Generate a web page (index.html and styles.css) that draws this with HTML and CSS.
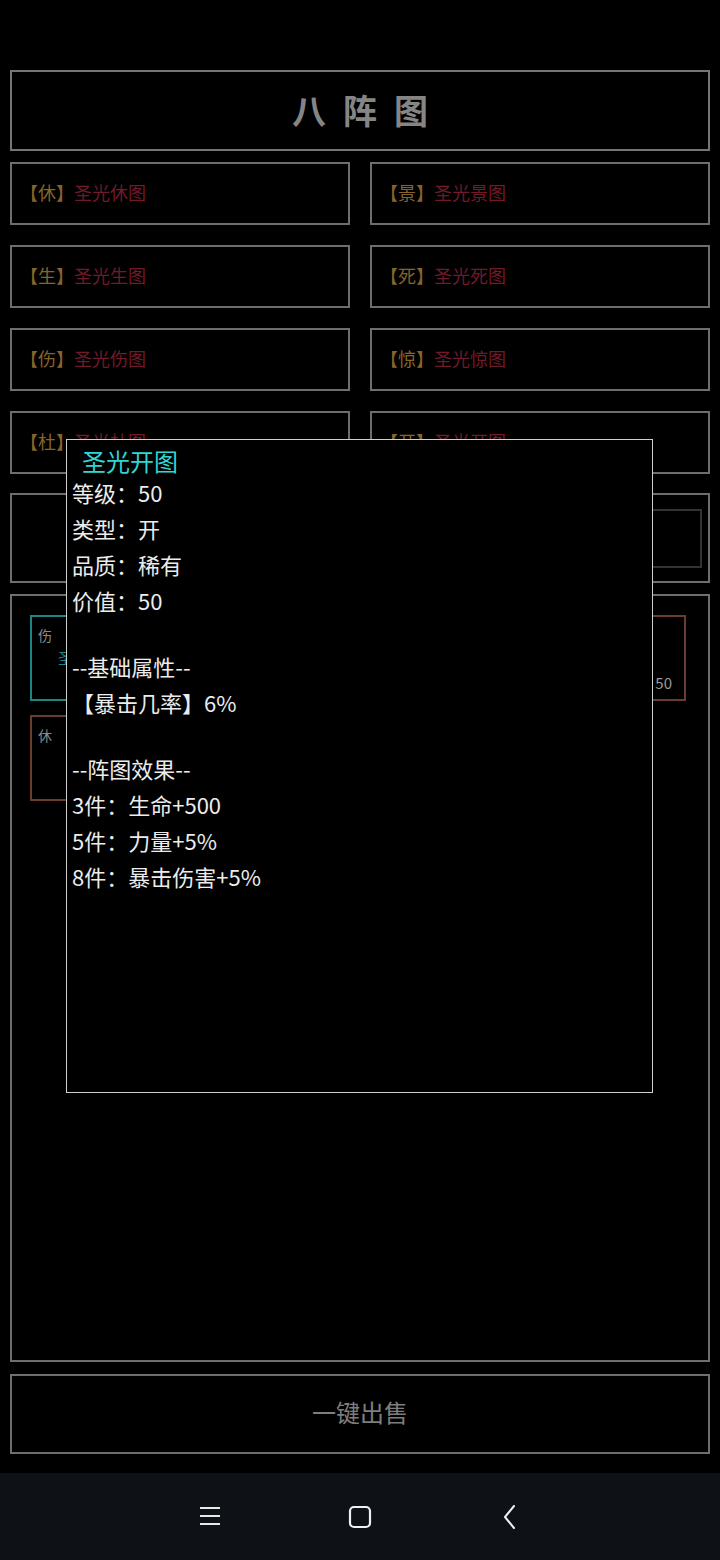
FILE: index.html
```html
<!DOCTYPE html>
<html>
  <head>
    <meta name="viewport" content="width=device-width, initial-scale=1">
    <link rel="stylesheet" href="styles.css">
  </head>

  <body>
    <div class="status"></div>

    <div class="page">
      <div class="title">八阵图</div>

      <div class="slots">
        <div class="slot"><span class="tag">【休】</span><span class="name">圣光休图</span></div>
        <div class="slot"><span class="tag">【景】</span><span class="name">圣光景图</span></div>
        <div class="slot"><span class="tag">【生】</span><span class="name">圣光生图</span></div>
        <div class="slot"><span class="tag">【死】</span><span class="name">圣光死图</span></div>
        <div class="slot"><span class="tag">【伤】</span><span class="name">圣光伤图</span></div>
        <div class="slot"><span class="tag">【惊】</span><span class="name">圣光惊图</span></div>
        <div class="slot"><span class="tag">【杜】</span><span class="name">圣光杜图</span></div>
        <div class="slot"><span class="tag">【开】</span><span class="name">圣光开图</span></div>
      </div>

      <div class="bar">
        <div class="bar-box"></div>
      </div>

      <div class="bag">
        <div class="card cyan">
          <span class="card-type">伤</span>
          <span class="card-name">圣光伤图</span>
        </div>
        <div class="card"></div>
        <div class="card"></div>
        <div class="card brown">
          <span class="card-lv">50</span>
        </div>
        <div class="card brown">
          <span class="card-type">休</span>
        </div>
      </div>

      <button class="sell">一键出售</button>
    </div>

    <div class="nav">
      <svg width="24" height="24" viewBox="0 0 24 24">
        <path d="M2 3h20M2 11h20M2 19h20" stroke="#e8e8e8" stroke-width="2" fill="none"/>
      </svg>
      <svg width="24" height="24" viewBox="0 0 24 24">
        <rect x="2" y="2" width="20" height="20" rx="4" stroke="#f0f0f0" stroke-width="2.2" fill="none"/>
      </svg>
      <svg width="24" height="24" viewBox="0 0 24 24">
        <path d="M16 1L7 12l9 11" stroke="#f0f0f0" stroke-width="2" fill="none" stroke-linecap="round" stroke-linejoin="round"/>
      </svg>
    </div>

    <!-- tooltip of the selected piece -->
    <div class="tip">
      <div class="tip-title">圣光开图</div>
      <div class="tip-line">等级：50</div>
      <div class="tip-line">类型：开</div>
      <div class="tip-line">品质：稀有</div>
      <div class="tip-line">价值：50</div>
      <div class="tip-gap"></div>
      <div class="tip-line">--基础属性--</div>
      <div class="tip-line">【暴击几率】6%</div>
      <div class="tip-gap"></div>
      <div class="tip-line">--阵图效果--</div>
      <div class="tip-line">3件：生命+500</div>
      <div class="tip-line">5件：力量+5%</div>
      <div class="tip-line">8件：暴击伤害+5%</div>
    </div>
  </body>
</html>
```

FILE: styles.css
```css
/* page */
body {
margin: 0;
background: #000;
font-family: "Noto Sans CJK SC", "Noto Sans", sans-serif;
color: #ddd;
width: 720px;
height: 1560px;
position: relative;
overflow: hidden;
}

.status {
height: 70px;
}

.page {
padding: 0 10px;
display: flex;
flex-direction: column;
}

.title {
border: 2px solid #747474;
display: flex;
align-items: center;
justify-content: center;
padding-bottom: 2px;
box-sizing: border-box;
height: 81px;
font-size: 34px;
font-weight: bold;
letter-spacing: 17px;
text-indent: 17px;
color: #858585;
}

/* Slots for the eight pieces */
.slots {
margin-top: 11px;
display: grid;
grid-template-columns: 1fr 1fr;
column-gap: 20px;
row-gap: 20px;
}

.slot {
border: 2px solid #6e6e6e;
display: flex;
align-items: center;
padding-left: 8px;
padding-bottom: 4px;
box-sizing: border-box;
height: 63px;
font-size: 18px;
}

.tag {
color: #86652a;
}

.name {
color: #701a2a;
}

.bar {
margin-top: 19px;
height: 86px;
border: 2px solid #6e6e6e;
display: flex;
justify-content: flex-end;
align-items: center;
padding-right: 6px;
}

.bar-box {
width: 60px;
height: 55px;
border: 2px solid #333;
}

/* Bag panel */
.bag {
margin-top: 11px;
height: 727px;
border: 2px solid #6e6e6e;
padding: 19px 22px 18px 18px;
display: grid;
grid-template-columns: repeat(4, 1fr);
grid-auto-rows: 86px;
gap: 14px;
align-content: start;
}

.card {
position: relative;
border: 2px solid transparent;
}

.card.cyan {
border-color: #1d8584;
}

.card.brown {
border-color: #6a3e2a;
}

.card-type {
position: absolute;
left: 6px;
top: 8px;
font-size: 14px;
color: #8a8a8a;
}

.card-name {
position: absolute;
left: 26px;
top: 30px;
white-space: nowrap;
font-size: 15px;
color: #1d8584;
}

.card-lv {
position: absolute;
right: 12px;
bottom: 6px;
font-size: 15px;
color: #9a9a9a;
}

.sell {
margin-top: 12px;
height: 80px;
background: #000;
border: 2px solid #6e6e6e;
color: #7e7e7e;
font-family: "Noto Sans CJK SC", sans-serif;
font-size: 24px;
padding-bottom: 6px;
}

/* Navigation bar */
.nav {
position: absolute;
left: 0;
right: 0;
bottom: 0;
height: 87px;
background: #0e1116;
display: flex;
justify-content: center;
align-items: center;
gap: 126px;
}

/* Tooltip */
.tip {
position: absolute;
left: 66px;
top: 439px;
width: 580px;
height: 644px;
background: #000;
border: 1.5px solid #cfcfcf;
padding: 8px 0 0 5px;
}

.tip-title {
padding-left: 10px;
font-size: 24px;
line-height: 26px;
color: #2fd6d2;
}

.tip-line {
font-size: 22px;
line-height: 36px;
color: #ececec;
}

.tip-gap {
height: 30px;
}
```
